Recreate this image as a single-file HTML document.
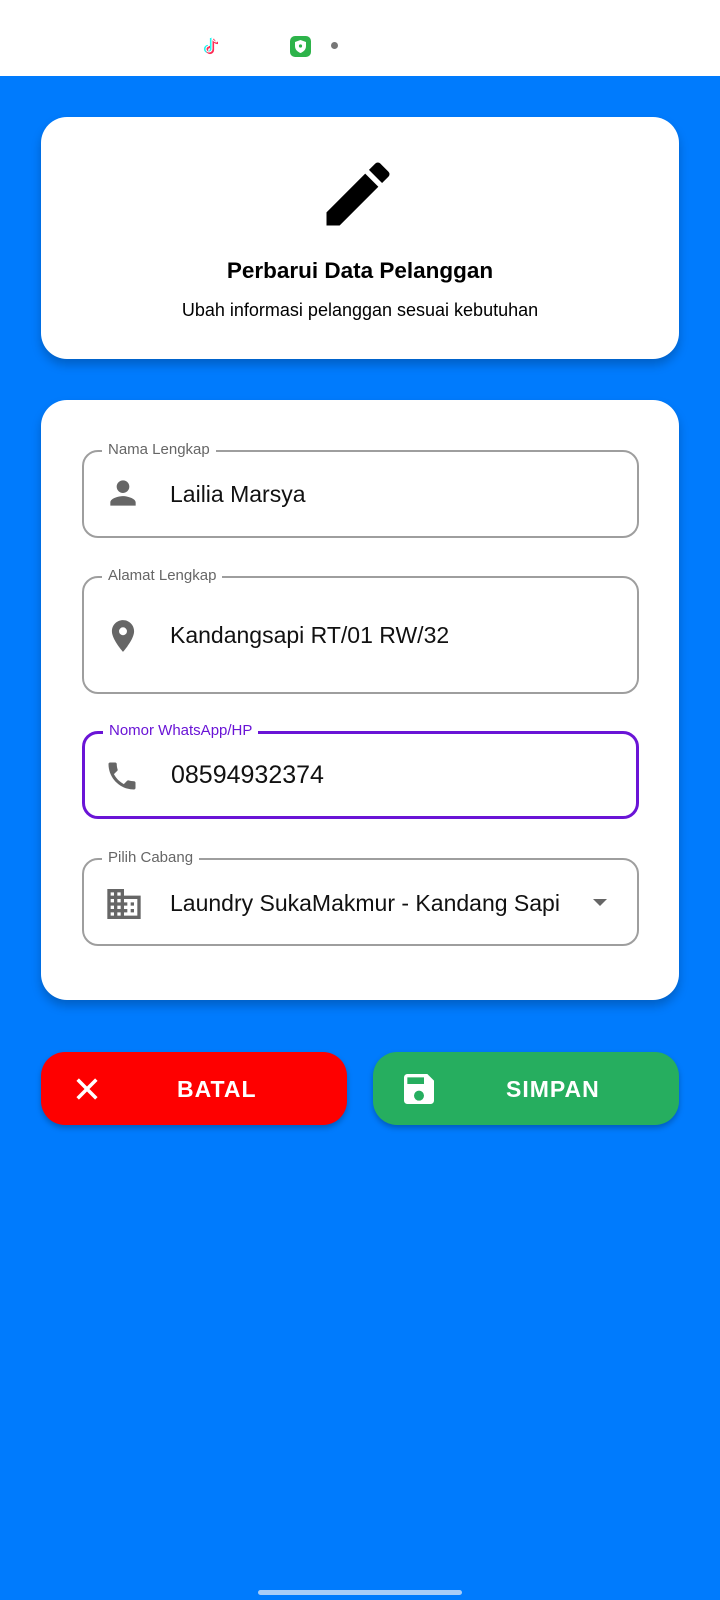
<!DOCTYPE html>
<html><head><meta charset="utf-8"><style>
*{box-sizing:border-box;margin:0;padding:0}
body{width:720px;height:1600px;background:#007bfd;position:relative;overflow:hidden;font-family:"Liberation Sans",sans-serif}
.status{position:absolute;left:0;top:0;width:720px;height:76px;background:#fff}
.card{position:absolute;background:#fff;border-radius:26px;box-shadow:0 6px 10px rgba(0,0,0,.22)}
.field{position:absolute;left:82px;width:557px;border:2px solid #9e9e9e;border-radius:16px}
.field .lbl{position:absolute;left:18px;top:-11px;background:#fff;padding:0 6px;font-size:15px;color:#666;line-height:18px}
.field .val{position:absolute;left:86px;font-size:23px;color:#111}
.field svg{position:absolute;left:20px}
.btn{position:absolute;top:1052px;height:73px;border-radius:24px;box-shadow:0 3px 6px rgba(0,0,0,.25);color:#fff;font-weight:bold;font-size:23px;letter-spacing:1px}
.btn span{position:absolute;top:24px}
</style></head><body>
<div class="status">
<svg style="position:absolute;left:203px;top:36px" width="18" height="20" viewBox="0 0 18 20"><path d="M9 2v11a3 3 0 1 1-3-3M9 2c1 3 3 4 5 4" fill="none" stroke="#25f4ee" stroke-width="2.2" transform="translate(-1,0)"/><path d="M9 2v11a3 3 0 1 1-3-3M9 2c1 3 3 4 5 4" fill="none" stroke="#fe2c55" stroke-width="2.2" transform="translate(1,1)"/><path d="M9 2v11a3 3 0 1 1-3-3M9 2c1 3 3 4 5 4" fill="none" stroke="#fff" stroke-width="1"/></svg>
<div style="position:absolute;left:290px;top:36px;width:21px;height:21px;border-radius:5px;background:#2db34a"></div>
<svg style="position:absolute;left:294px;top:39px" width="13" height="15" viewBox="0 0 13 15"><path d="M6.5 1L12 3v4c0 4-3 6-5.5 7C4 13 1 11 1 7V3z" fill="#fff"/><circle cx="6.5" cy="7" r="1.6" fill="#2db34a"/></svg>
<div style="position:absolute;left:331px;top:42px;width:7px;height:7px;border-radius:50%;background:#777"></div>
</div>

<div class="card" style="left:41px;top:117px;width:638px;height:242px">
<svg style="position:absolute;left:275px;top:35px" width="84" height="84" viewBox="0 0 24 24"><path d="M3 17.25V21h3.75L17.81 9.94l-3.75-3.75L3 17.25zM20.71 7.04a1 1 0 0 0 0-1.41l-2.34-2.34a1 1 0 0 0-1.41 0l-1.83 1.83 3.75 3.75 1.83-1.83z" fill="#000"/></svg>
<div style="position:absolute;left:0;width:638px;top:141px;text-align:center;font-size:22.5px;font-weight:bold;color:#000">Perbarui Data Pelanggan</div>
<div style="position:absolute;left:0;width:638px;top:183px;text-align:center;font-size:18px;color:#000">Ubah informasi pelanggan sesuai kebutuhan</div>
</div>

<div class="card" style="left:41px;top:400px;width:638px;height:600px"></div>

<div class="field" style="top:450px;height:88px">
<div class="lbl">Nama Lengkap</div>
<svg style="top:22px" width="38" height="38" viewBox="0 0 24 24"><path d="M12 12c2.21 0 4-1.79 4-4s-1.79-4-4-4-4 1.79-4 4 1.79 4 4 4zm0 2c-2.67 0-8 1.34-8 4v2h16v-2c0-2.66-5.33-4-8-4z" fill="#666"/></svg>
<div class="val" style="top:29px">Lailia Marsya</div>
</div>

<div class="field" style="top:576px;height:118px">
<div class="lbl">Alamat Lengkap</div>
<svg style="top:39px" width="38" height="38" viewBox="0 0 24 24"><path d="M12 2C8.13 2 5 5.13 5 9c0 5.25 7 13 7 13s7-7.75 7-13c0-3.87-3.13-7-7-7zm0 9.5a2.5 2.5 0 1 1 0-5 2.5 2.5 0 0 1 0 5z" fill="#666"/></svg>
<div class="val" style="top:44px">Kandangsapi RT/01 RW/32</div>
</div>

<div class="field" style="top:731px;height:88px;border:3px solid #6a14d6">
<div class="lbl" style="color:#6a14d6;top:-12px">Nomor WhatsApp/HP</div>
<svg style="top:24px;left:19px" width="36" height="36" viewBox="0 0 24 24"><path d="M6.62 10.79c1.44 2.83 3.76 5.14 6.59 6.59l2.2-2.2c.27-.27.67-.36 1.02-.24 1.12.37 2.33.57 3.57.57.55 0 1 .45 1 1V20c0 .55-.45 1-1 1-9.39 0-17-7.61-17-17 0-.55.45-1 1-1h3.5c.55 0 1 .45 1 1 0 1.25.2 2.45.57 3.57.11.35.03.74-.25 1.02l-2.2 2.2z" fill="#666"/></svg>
<div class="val" style="top:27px;font-size:25px">08594932374</div>
</div>

<div class="field" style="top:858px;height:88px">
<div class="lbl">Pilih Cabang</div>
<svg style="top:24px" width="40" height="40" viewBox="0 0 24 24"><path d="M12 7V3H2v18h20V7H12zM6 19H4v-2h2v2zm0-4H4v-2h2v2zm0-4H4V9h2v2zm0-4H4V5h2v2zm4 12H8v-2h2v2zm0-4H8v-2h2v2zm0-4H8V9h2v2zm0-4H8V5h2v2zm10 12h-8v-2h2v-2h-2v-2h2v-2h-2V9h8v10zm-2-8h-2v2h2v-2zm0 4h-2v2h2v-2z" fill="#666"/></svg>
<div class="val" style="top:30px">Laundry SukaMakmur - Kandang Sapi</div>
<svg style="left:504px;top:30px" width="24" height="24" viewBox="0 0 24 24"><path d="M5 9h14l-7 7z" fill="#666"/></svg>
</div>

<div class="btn" style="left:41px;width:306px;background:#fe0000">
<svg style="position:absolute;left:32px;top:23px" width="28" height="28" viewBox="0 0 24 24"><path d="M4 4l16 16M20 4L4 20" stroke="#fff" stroke-width="3"/></svg>
<span style="left:136px">BATAL</span></div>
<div class="btn" style="left:373px;width:306px;background:#26ae5f">
<svg style="position:absolute;left:26px;top:17px" width="40" height="40" viewBox="0 0 24 24"><path d="M17 3H5a2 2 0 0 0-2 2v14a2 2 0 0 0 2 2h14a2 2 0 0 0 2-2V7l-4-4zm-5 16a3 3 0 1 1 0-6 3 3 0 0 1 0 6zm3-10H5V5h10v4z" fill="#fff"/></svg>
<span style="left:133px">SIMPAN</span></div>

<div style="position:absolute;left:258px;top:1590px;width:204px;height:5px;border-radius:3px;background:#a9cdf7"></div>
</body></html>
